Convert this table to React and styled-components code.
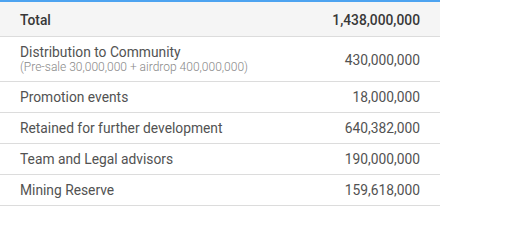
import React from "react";
import styled, { createGlobalStyle } from "styled-components";

const rows = [
  { label: "Distribution to Community", note: "(Pre-sale 30,000,000 + airdrop 400,000,000)", value: "430,000,000" },
  { label: "Promotion events", value: "18,000,000" },
  { label: "Retained for further development", value: "640,382,000" },
  { label: "Team and Legal advisors", value: "190,000,000" },
  { label: "Mining Reserve", value: "159,618,000" },
];

function App() {
  return (
    <>
      <GlobalStyle />
      <Table>
        <thead>
          <HeadRow>
            <Cell>Total</Cell>
            <Amount>1,438,000,000</Amount>
          </HeadRow>
        </thead>
        <tbody>
          {rows.map((r) => (
            <Row key={r.label} $tall={!!r.note}>
              <Cell>
                {r.label}
                {r.note && <Note>{r.note}</Note>}
              </Cell>
              <Amount>{r.value}</Amount>
            </Row>
          ))}
        </tbody>
      </Table>
    </>
  );
}

export default App;

const GlobalStyle = createGlobalStyle`
  body {
    margin: 0;
    background: #fff;
    font-family: Roboto, "Liberation Sans", sans-serif;
  }
`;

const Table = styled.table`
  width: 440px;
  border-collapse: collapse;
  border-top: 2px solid #4da3f0;
  font-size: 13.8px;
  color: #525252;
`;

const Row = styled.tr`
  height: ${(p) => (p.$tall ? "45px" : "31px")};
  border-bottom: 1px solid #dcdcdc;

  td {
    padding: ${(p) => (p.$tall ? "7px 20px 5px" : "1px 20px 0")};
  }
`;

const HeadRow = styled.tr`
  height: 35px;
  background: #f5f5f5;
  border-bottom: 1px solid #dcdcdc;

  td {
    padding-top: 3px;
    font-weight: 500;
    color: #383838;
  }
`;

const Cell = styled.td`
  padding: 0 20px;
  text-align: left;
  vertical-align: middle;
  line-height: 16px;
`;

const Amount = styled.td`
  padding: 0 20px;
  text-align: right;
  vertical-align: middle;
  white-space: nowrap;
`;

const Note = styled.div`
  font-size: 12px;
  font-weight: 300;
  color: #888;
  line-height: 15px;
`;
